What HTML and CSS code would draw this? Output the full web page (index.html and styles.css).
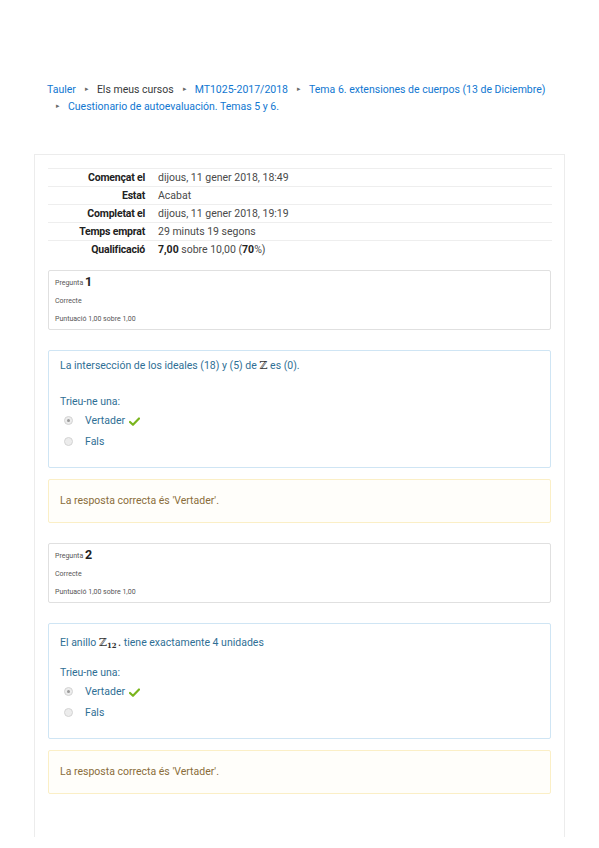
FILE: index.html
```html
<html lang="ca">
<head>
<meta charset="UTF-8">
<meta name="viewport" content="width=device-width, initial-scale=1.0">
<title>Cuestionario de autoevaluación. Temas 5 y 6.: Revisió de l'intent</title>
<link rel="stylesheet" href="styles.css">
</head>
<body>
<nav class="crumbs">
  <ol>
    <li class="first"><a href="#">Tauler</a></li>
    <li><span class="plain">Els meus cursos</span></li>
    <li><a href="#">MT1025-2017/2018</a></li>
    <li><a href="#">Tema 6. extensiones de cuerpos (13 de Diciembre)</a></li>
    <li><a href="#">Cuestionario de autoevaluación. Temas 5 y 6.</a></li>
  </ol>
</nav>

<main class="card">
  <table class="summary">
    <tr><th>Començat el</th><td>dijous, 11 gener 2018, 18:49</td></tr>
    <tr><th>Estat</th><td>Acabat</td></tr>
    <tr><th>Completat el</th><td>dijous, 11 gener 2018, 19:19</td></tr>
    <tr><th>Temps emprat</th><td>29 minuts 19 segons</td></tr>
    <tr><th>Qualificació</th><td><b>7,00</b> sobre 10,00 (<b>70</b>%)</td></tr>
  </table>

  <section class="que">
    <div class="info">
      <div class="qno">Pregunta <b>1</b></div>
      <div>Correcte</div>
      <div>Puntuació 1,00 sobre 1,00</div>
    </div>
    <div class="formulation">
      <p class="qtext">La intersección de los ideales (18) y (5) de <span class="math">ℤ</span> es (0).</p>
      <p class="prompt">Trieu-ne una:</p>
      <div class="answer">
        <div class="opt"><span class="radio checked"></span>Vertader <svg class="tick" viewBox="0 0 12 10"><path d="M1 5.5 L4.3 8.6 L11 1.6" fill="none" stroke="#7ab51d" stroke-width="2.4" stroke-linecap="round" stroke-linejoin="round"/></svg></div>
        <div class="opt"><span class="radio"></span>Fals</div>
      </div>
    </div>
    <div class="outcome">La resposta correcta és 'Vertader'.</div>
  </section>

  <section class="que">
    <div class="info">
      <div class="qno">Pregunta <b>2</b></div>
      <div>Correcte</div>
      <div>Puntuació 1,00 sobre 1,00</div>
    </div>
    <div class="formulation">
      <p class="qtext q2">El anillo <span class="math">ℤ<sub>12</sub>.</span> tiene exactamente 4 unidades</p>
      <p class="prompt">Trieu-ne una:</p>
      <div class="answer">
        <div class="opt"><span class="radio checked"></span>Vertader <svg class="tick" viewBox="0 0 12 10"><path d="M1 5.5 L4.3 8.6 L11 1.6" fill="none" stroke="#7ab51d" stroke-width="2.4" stroke-linecap="round" stroke-linejoin="round"/></svg></div>
        <div class="opt"><span class="radio"></span>Fals</div>
      </div>
    </div>
    <div class="outcome">La resposta correcta és 'Vertader'.</div>
  </section>
</main>
</body>
</html>
```

FILE: styles.css
```css
*{box-sizing:border-box;margin:0;padding:0}
body{font-family:Roboto,"Liberation Sans",sans-serif;font-size:10.5px;color:#373a3c;background:#fff}
a{color:#1177d1;text-decoration:none}

.crumbs{padding:81px 0 0 47px;width:560px}
.crumbs ol{list-style:none;display:flex;flex-wrap:wrap;line-height:17px}
.crumbs li{display:flex;align-items:center}
.crumbs li:not(.first)::before{content:"\25B8";color:#6a6a6a;font-size:7px;padding:0 8px 0 9px}
.crumbs .plain{color:#373a3c}

.card{margin:39px 0 0 34px;width:531px;border:1px solid #ececec;border-bottom:none;padding:13px 13px 23px 13px}

.summary{width:504px;border-collapse:collapse;margin-bottom:11px;font-size:10.5px}
.summary tr{height:18px;border-top:1px solid #eeeeee}
.summary th{width:110px;text-align:right;font-weight:700;color:#222;padding:0 13px 0 0;white-space:nowrap;letter-spacing:-0.2px}
.summary td{color:#4a4a4a;padding:0}
.summary td b{color:#222}

.que{margin-bottom:20px}
.info{border:1px solid #e0e0e0;border-radius:2px;padding:2px 6px;font-size:7px;color:#555;line-height:18px;height:60px}
.info .qno b{font-size:12.5px;color:#222;font-weight:700;vertical-align:-1px}

.formulation{margin-top:20px;border:1px solid #cfe5f4;border-radius:2px;padding:7px 11px 15px;color:#2f6f95}
.qtext{line-height:16px;height:16px}
.qtext.q2{padding-top:4px;height:20px}
.math{font-family:"DejaVu Serif",serif;font-size:11px;color:#333}
.math sub{font-size:7px;font-weight:700;vertical-align:-2px;margin-right:1px}
.prompt{margin-top:20px;line-height:16px}
.q2 + .prompt{margin-top:14px}
.answer .opt{display:flex;align-items:center;height:21px;padding-left:4px;color:#2f6f95}
.radio{width:9px;height:9px;border-radius:50%;border:1px solid #d4d4d4;background:#ececec;margin-right:12px;display:flex;align-items:center;justify-content:center}
.radio.checked::after{content:"";width:3px;height:3px;border-radius:50%;background:#9a9a9a}
.tick{width:11px;height:9px;margin-left:4px;margin-top:2px}

.outcome{margin-top:11px;border:1px solid #fbefc6;border-radius:2px;background:#fffefa;color:#8a6d3b;padding:13px 11px;line-height:16px;height:44px}
```
